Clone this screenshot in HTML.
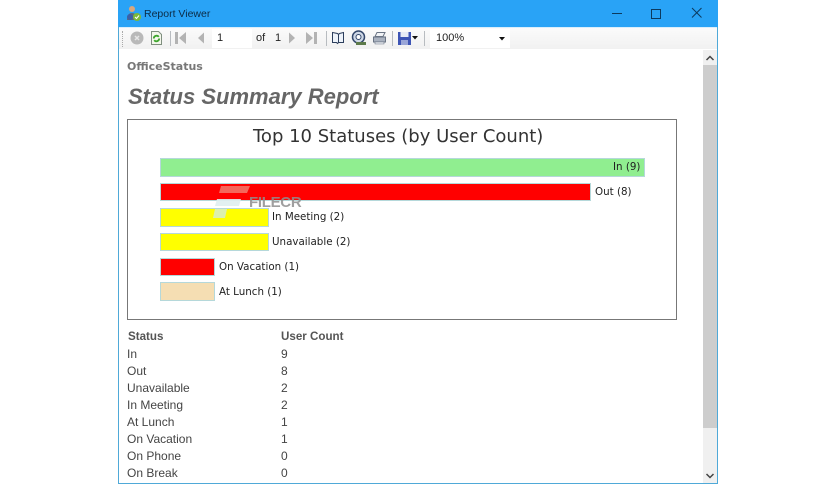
<!DOCTYPE html>
<html><head><meta charset="utf-8"><style>
html,body{margin:0;padding:0;background:#fff;}
body{width:836px;height:484px;position:relative;overflow:hidden;font-family:"Liberation Sans",sans-serif;}
.a{position:absolute;white-space:nowrap;}
.bar{position:absolute;left:160px;box-sizing:border-box;border:1px solid #b5d8da;}
.v{font-family:"DejaVu Sans",sans-serif;font-size:10.3px;color:#222;line-height:14px;}
.r{font-size:12px;color:#444;line-height:14px;}
.sep{position:absolute;top:31px;width:1px;height:15px;background:#b8bcc0;}
</style></head><body>
<div class="a" style="left:118px;top:0;width:600px;height:484px;box-sizing:border-box;border:1px solid #4fa9d8;border-top:0;"></div>
<div class="a" style="left:118px;top:0;width:600px;height:27px;background:#29a3f6;"></div>
<svg class="a" style="left:125px;top:5px" width="17" height="17" viewBox="0 0 17 17"><circle cx="7" cy="4" r="3" fill="#d9a77e"/><path d="M2 15c0-5 2-7 5-7s5 2 5 7z" fill="#5d6a7c"/><circle cx="5" cy="12" r="3" fill="#3b5fa8"/><circle cx="12" cy="12" r="4" fill="#7cb83a"/><path d="M10 12l1.500 1.500 2.500-3" stroke="#fff" stroke-width="1" fill="none"/></svg>
<div class="a" style="left:144px;top:7px;font-size:10.500px;line-height:14px;color:#0c2b45;">Report Viewer</div>
<svg class="a" style="left:650px;top:7px" width="14" height="14"><rect x="1.500" y="2.500" width="9" height="9" fill="none" stroke="#0c3a5e" stroke-width="1"/></svg>
<div class="a" style="left:612px;top:13px;width:10px;height:1px;background:#0c3a5e;"></div>
<svg class="a" style="left:691px;top:7px" width="12" height="12"><path d="M1 1l9.500 9.500M10.500 1L1 10.500" stroke="#0c3a5e" stroke-width="1" fill="none"/></svg>
<div class="a" style="left:119px;top:28px;width:598px;height:21px;background:linear-gradient(#fbfbfb,#f1f1f1);"></div>
<div class="a" style="left:119px;top:27px;width:598px;height:1px;background:#d9eefc;"></div>
<div class="a" style="left:122px;top:31px;width:1px;height:16px;border-left:1px dotted #aaa;"></div>
<svg class="a" style="left:130px;top:31px" width="15" height="15"><circle cx="7" cy="7" r="6.500" fill="#b9b9b9"/><path d="M5 5l4 4M9 5l-4 4" stroke="#e6e6e6" stroke-width="1.500"/></svg>
<svg class="a" style="left:150px;top:30px" width="14" height="16"><path d="M1.500 1.500h7l3 3v10h-10z" fill="#f4f7ec" stroke="#7f8f7f"/><path d="M3.800 8.500a2.800 2.800 0 0 1 5-1.700M9.200 8.500a2.800 2.800 0 0 1-5 1.700" fill="none" stroke="#3da62d" stroke-width="1.800"/></svg>
<div class="sep" style="left:170px"></div>
<svg class="a" style="left:175px;top:31px" width="12" height="14"><rect x="0" y="1" width="3" height="12" fill="#b3b3b3"/><path d="M11 1v12L4 7z" fill="#b3b3b3"/></svg>
<svg class="a" style="left:196px;top:31px" width="10" height="14"><path d="M8 1.500v11L2 7z" fill="#b3b3b3"/></svg>
<div class="a" style="left:212px;top:29px;width:40px;height:19px;background:#fff;"></div>
<div class="a" style="left:217px;top:32px;font-size:11px;line-height:13px;color:#222;">1</div>
<div class="a" style="left:256px;top:32px;font-size:11px;line-height:13px;color:#222;">of</div>
<div class="a" style="left:275px;top:32px;font-size:11px;line-height:13px;color:#222;">1</div>
<svg class="a" style="left:287px;top:31px" width="10" height="14"><path d="M2 1.500v11L8 7z" fill="#b3b3b3"/></svg>
<svg class="a" style="left:306px;top:31px" width="12" height="14"><path d="M0 1v12L7 7z" fill="#b3b3b3"/><rect x="8" y="1" width="3" height="12" fill="#b3b3b3"/></svg>
<div class="sep" style="left:326px"></div>
<svg class="a" style="left:331px;top:31px" width="15" height="14"><path d="M1.500 1.500l5 1 1 1 1-1 4-1v10h-5l-1 1-1-1h-4z" fill="#eef3fa" stroke="#2c3e5c"/><path d="M7.500 3.500v8" stroke="#2c3e5c"/></svg>
<svg class="a" style="left:351px;top:30px" width="16" height="16"><circle cx="7.500" cy="7" r="6" fill="#cfd8e6" stroke="#33476b" stroke-width="1.500"/><circle cx="7.500" cy="7" r="2.500" fill="#fff" stroke="#33476b"/><rect x="5" y="12" width="10" height="3" fill="#5d7a4a"/></svg>
<svg class="a" style="left:372px;top:31px" width="15" height="14"><path d="M5 1.500h8l-2 4H3z" fill="#f1f3f6" stroke="#6a7484"/><path d="M1.500 6h12v5h-12z" fill="#aab2bf" stroke="#6a7484"/><path d="M3 11h9v2H3z" fill="#e6e9ee" stroke="#6a7484" stroke-width=".6"/></svg>
<div class="sep" style="left:392px"></div>
<svg class="a" style="left:397px;top:31px" width="15" height="15"><rect x="1" y="1" width="13" height="13" fill="#3e55b5"/><rect x="3.500" y="1" width="8" height="5" fill="#e8ecf6"/><rect x="4" y="9" width="7" height="5" fill="#9aa6d8"/></svg>
<svg class="a" style="left:412px;top:36px" width="6" height="4"><path d="M0 0h6L3 3.500z" fill="#111"/></svg>
<div class="sep" style="left:424px"></div>
<div class="a" style="left:430px;top:29px;width:80px;height:19px;background:#fff;"></div>
<div class="a" style="left:436px;top:32px;font-size:11px;line-height:13px;color:#222;">100%</div>
<svg class="a" style="left:499px;top:37px" width="6" height="4"><path d="M0 0h6L3 3.500z" fill="#111"/></svg>

<div class="a" style="left:703px;top:50px;width:14px;height:433px;background:#f0f0f0;"></div>
<div class="a" style="left:703px;top:65px;width:14px;height:363px;background:#cdcdcd;"></div>
<svg class="a" style="left:705px;top:54px" width="10" height="8"><path d="M1.500 6L5 2.500 8.500 6" stroke="#444" stroke-width="1.500" fill="none"/></svg>
<svg class="a" style="left:705px;top:472px" width="10" height="8"><path d="M1.500 2L5 5.500 8.500 2" stroke="#444" stroke-width="1.500" fill="none"/></svg>

<div class="a" style="left:127px;top:60px;font-family:'DejaVu Sans',sans-serif;font-size:11px;font-weight:bold;line-height:14px;color:#777;">OfficeStatus</div>
<div class="a" style="left:128px;top:83px;font-size:22px;font-weight:bold;font-style:italic;line-height:28px;color:#666;">Status Summary Report</div>

<div class="a" style="left:127px;top:119px;width:550px;height:201px;box-sizing:border-box;border:1px solid #777;"></div>
<div class="a" style="left:253px;top:126px;font-family:'DejaVu Sans',sans-serif;font-size:18px;line-height:22px;color:#333;">Top 10 Statuses (by User Count)</div>

<div class="bar" style="top:158px;width:485px;height:19px;background:#90ee90;"></div>
<div class="bar" style="top:183px;width:431px;height:18px;background:#ff0000;"></div>
<div class="bar" style="top:208px;width:109px;height:19px;background:#ffff00;"></div>
<div class="bar" style="top:233px;width:109px;height:18px;background:#ffff00;"></div>
<div class="bar" style="top:258px;width:55px;height:18px;background:#ff0000;"></div>
<div class="bar" style="top:282px;width:55px;height:19px;background:#f5deb3;"></div>

<div class="a v" style="left:613px;top:160px;">In (9)</div>
<div class="a v" style="left:595px;top:185px;">Out (8)</div>
<div class="a v" style="left:272px;top:210px;">In Meeting (2)</div>
<div class="a v" style="left:272px;top:235px;">Unavailable (2)</div>
<div class="a v" style="left:219px;top:260px;">On Vacation (1)</div>
<div class="a v" style="left:219px;top:285px;">At Lunch (1)</div>

<svg class="a" style="left:212px;top:185px" width="42" height="36"><path d="M9 1h29l-3 7H7z" fill="#f08a7a" opacity=".75"/><path d="M5 14h24l-2 7H3z" fill="#dfeef0" opacity=".9"/><path d="M3 24h12l-2 9H1z" fill="#d8eec0" opacity=".9"/></svg>
<div class="a" style="left:249px;top:195px;font-size:15px;font-weight:bold;line-height:16px;color:#8f8f8f;opacity:.85;letter-spacing:-.3px;">FILECR</div>

<div class="a r" style="left:128px;top:330px;font-size:11.600px;font-weight:bold;color:#555;">Status</div>
<div class="a r" style="left:281px;top:330px;font-size:11.600px;font-weight:bold;color:#555;">User Count</div>
<div class="a r" style="left:127px;top:347px;">In</div><div class="a r" style="left:281px;top:347px;">9</div>
<div class="a r" style="left:127px;top:364px;">Out</div><div class="a r" style="left:281px;top:364px;">8</div>
<div class="a r" style="left:127px;top:381px;">Unavailable</div><div class="a r" style="left:281px;top:381px;">2</div>
<div class="a r" style="left:127px;top:398px;">In Meeting</div><div class="a r" style="left:281px;top:398px;">2</div>
<div class="a r" style="left:127px;top:415px;">At Lunch</div><div class="a r" style="left:281px;top:415px;">1</div>
<div class="a r" style="left:127px;top:432px;">On Vacation</div><div class="a r" style="left:281px;top:432px;">1</div>
<div class="a r" style="left:127px;top:449px;">On Phone</div><div class="a r" style="left:281px;top:449px;">0</div>
<div class="a r" style="left:127px;top:466px;">On Break</div><div class="a r" style="left:281px;top:466px;">0</div>
</body></html>
